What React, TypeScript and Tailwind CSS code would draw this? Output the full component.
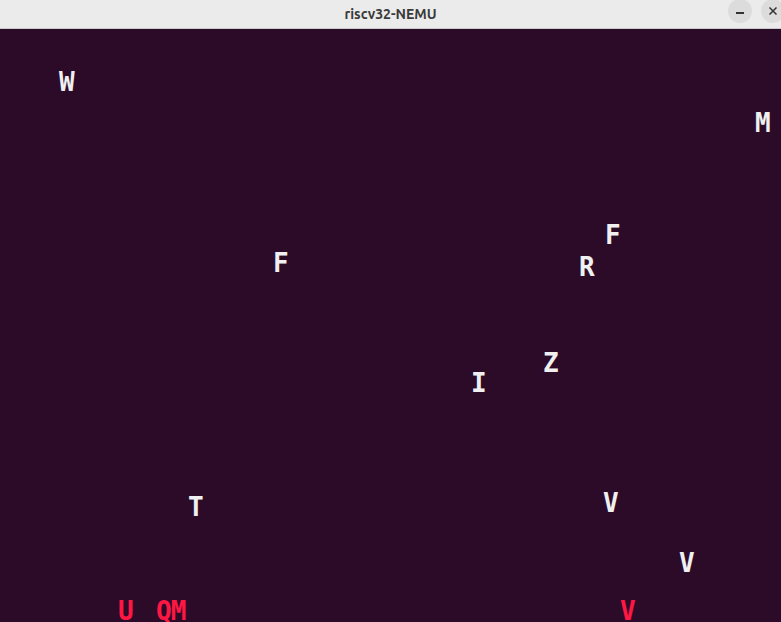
import type { JSX } from "react";

type Letter = { ch: string; x: number; y: number; hit?: boolean };

// positions measured on the canvas (top-left of the glyph, page coords)
const letters: Letter[] = [
  { ch: "W", x: 58, y: 72 },
  { ch: "M", x: 754, y: 113 },
  { ch: "F", x: 604, y: 225 },
  { ch: "F", x: 272, y: 253 },
  { ch: "R", x: 578, y: 257 },
  { ch: "Z", x: 542, y: 353 },
  { ch: "I", x: 470, y: 373 },
  { ch: "T", x: 187, y: 497 },
  { ch: "V", x: 602, y: 493 },
  { ch: "V", x: 678, y: 553 },
  { ch: "U", x: 117, y: 601, hit: true },
  { ch: "QM", x: 155, y: 601, hit: true },
  { ch: "V", x: 619, y: 601, hit: true },
];

function TitleBar() {
  return (
    <div className="relative flex h-[29px] items-center justify-center border-b border-[#c9c9c9] bg-[#ebebeb]">
      <span
        className="text-[14px] font-bold text-[#3a3a3a]"
        style={{ fontFamily: '"Ubuntu", "Noto Sans", "Liberation Sans", sans-serif' }}
      >
        riscv32-NEMU
      </span>
      <div className="absolute right-[-4px] top-[-1px] flex gap-[9px]">
        <button className="flex h-[24px] w-[24px] items-center justify-center rounded-full bg-[#dcdcdc]">
          <span className="mt-[4px] block h-[1.5px] w-[8px] bg-[#333]" />
        </button>
        <button className="flex h-[24px] w-[24px] items-center justify-center rounded-full bg-[#dcdcdc]">
          <svg width="10" height="10" viewBox="0 0 10 10">
            <path d="M1.5 1.5 L8.5 8.5 M8.5 1.5 L1.5 8.5" stroke="#333" strokeWidth="1.5" />
          </svg>
        </button>
      </div>
    </div>
  );
}

export default function App(): JSX.Element {
  return (
    <div className="flex h-[622px] w-[781px] flex-col overflow-hidden bg-[#2c0b29]">
      <TitleBar />
      <div className="relative flex-1">
        {letters.map((l, i) => (
          <span
            key={i}
            className={`absolute whitespace-pre text-[26px] font-bold leading-[26px] ${l.hit ? "text-[#ff1744]" : "text-[#f0f0f0]"}`}
            style={{
              left: l.x + 1,
              top: l.y - 29 - 3,
              fontFamily: '"DejaVu Sans Mono", "Liberation Mono", monospace',
              letterSpacing: l.ch.length > 1 ? "-1px" : undefined,
            }}
          >
            {l.ch}
          </span>
        ))}
      </div>
    </div>
  );
}
